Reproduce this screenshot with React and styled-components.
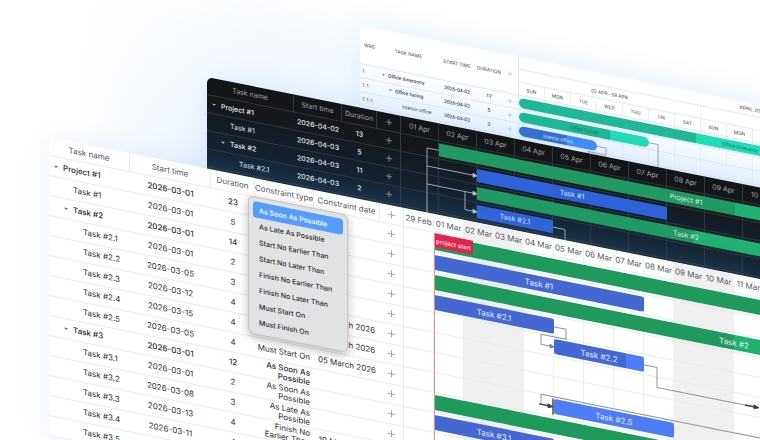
import React from 'react';
import styled, { createGlobalStyle, ThemeProvider, css } from 'styled-components';

const GlobalStyle = createGlobalStyle`
  * { box-sizing: border-box; }
  body { margin: 0; background: #fff; }
  button { font: inherit; color: inherit; background: none; border: none; padding: 0; cursor: pointer; }
`;

// Themes, one per gantt skin
const lightTheme = {
  font: '"Inter", "Liberation Sans", sans-serif',
  size: 8, headSize: 8, scaleSize: 8, head: 19, row: 20, day: 30, bar: 15, radius: 2,
  indent: 10, pad: 5, caret: 4, gap: 5,
  text: '#2b2d33', headText: '#55585e', line: '#e9eaec', scaleLine: '#eeeff1', icon: '#a4a6aa',
  background: '#fff', barText: '#e8eeff',
};

const darkTheme = {
  font: '"Inter", "Liberation Sans", sans-serif',
  size: 7, headSize: 7, scaleSize: 7, head: 18, row: 18, day: 38, bar: 13, radius: 1,
  indent: 9, pad: 5, caret: 4, gap: 5,
  text: '#e4e6e9', headText: '#a3a7ac', line: '#32373e', scaleLine: '#2f363e', icon: '#858b92',
  background: 'linear-gradient(#131416, #14171b 24px, #14293d 92px, #173453 160px)',
  barText: '#dcebea',
};

const materialTheme = {
  font: '"Roboto", "Liberation Sans", sans-serif',
  size: 5, headSize: 5, scaleSize: 5, head: 39, row: 14, day: 26, bar: 10, radius: 5,
  indent: 7, pad: 3, caret: 3, gap: 3,
  text: '#3d4a55', headText: '#4b545c', line: '#dfe8f0', scaleLine: '#e8eef4', icon: '#7fdcc8',
  background: 'linear-gradient(#fff, #fff 34px, #e3f0fd 90px)',
  barText: '#1c6f60',
};

const Stage = styled.main`
  position: relative;
  min-height: 100vh;
  overflow: hidden;
  background: #fff;
`;

const Glow = styled.div`
  position: absolute;
  inset: 0;
  background: linear-gradient(191deg, #fff 0%, #fff 12%, #e9f3fd 34%, #d3e7fb 50%);
  mask-image: linear-gradient(to right, transparent 10%, #000 36%);
`;

const Panel = styled.section`
  position: absolute;
  top: ${({ $top }) => $top}px;
  left: ${({ $left }) => $left}px;
  right: 0;
  display: flex;
  overflow: hidden;
  transform: skewY(11.3deg);
  transform-origin: 0 0;
  border-top-left-radius: 6px;
  background: ${({ theme }) => theme.background};
  color: ${({ theme }) => theme.text};
  font-family: ${({ theme }) => theme.font};
  font-size: ${({ theme }) => theme.size}px;
  box-shadow: 0 0 28px rgba(120, 180, 240, 0.16);
`;

const Grid = styled.table`
  flex: none;
  width: ${({ $width }) => $width}px;
  table-layout: fixed;
  border-spacing: 0;
  border-right: 1px solid ${({ theme }) => theme.line};
`;

const HeadCell = styled.th`
  height: ${({ theme }) => theme.head}px;
  padding: 0;
  font-size: ${({ theme }) => theme.headSize}px;
  font-weight: 400;
  color: ${({ theme }) => theme.headText};
  text-align: center;
  white-space: nowrap;
  border-bottom: 1px solid ${({ theme }) => theme.line};
  border-right: ${({ theme, $divided }) => ($divided ? `1px solid ${theme.line}` : 'none')};
`;

const Cell = styled.td`
  height: ${({ theme }) => theme.row}px;
  padding: 0 ${({ $align }) => ($align === 'right' ? 4 : 0)}px 0 ${({ $inset }) => ($inset ? 2 : 0)}px;
  line-height: 9px;
  text-align: ${({ $align }) => $align || 'center'};
  font-weight: ${({ $bold }) => ($bold ? 500 : 400)};
  white-space: ${({ $wrap }) => ($wrap ? 'normal' : 'nowrap')};
  border-bottom: 1px solid ${({ theme }) => theme.line};
`;

const NameBox = styled.div`
  display: flex;
  align-items: center;
  gap: ${({ theme }) => theme.gap}px;
  padding-left: ${({ theme, $level }) => theme.pad + $level * theme.indent}px;
`;

const Toggle = styled.button`
  display: flex;
  flex: none;
  width: ${({ theme }) => theme.caret}px;

  svg {
    width: 100%;
  }
`;

const ToggleSpace = styled.span`
  flex: none;
  width: ${({ theme }) => theme.caret}px;
`;

const AddButton = styled.button`
  display: inline-flex;
  vertical-align: middle;
  color: ${({ theme }) => theme.icon};
`;

const Timeline = styled.div`
  position: relative;
  flex: 1;
  min-width: 0;
  overflow: hidden;
`;

const Scale = styled.div`
  display: flex;
  height: ${({ theme, $height }) => $height || theme.head}px;
  font-size: ${({ theme }) => theme.scaleSize}px;
  color: ${({ theme }) => theme.headText};
  border-bottom: 1px solid ${({ theme }) => theme.line};
`;

const ScaleCell = styled.div`
  flex: none;
  display: flex;
  align-items: center;
  justify-content: center;
  width: ${({ theme, $days }) => ($days || 1) * theme.day}px;
  white-space: nowrap;
  border-right: 1px solid ${({ theme, $off }) => ($off ? '#f0f0f1' : theme.scaleLine)};
  background: ${({ $off }) => ($off ? '#f0f0f1' : 'transparent')};
`;

const Body = styled.div`
  position: relative;
`;

const DayColumns = styled.div`
  position: absolute;
  inset: 0;
  display: flex;
`;

const BarRow = styled.div`
  position: relative;
  display: grid;
  grid-auto-columns: ${({ theme }) => theme.day}px;
  align-items: center;
  height: ${({ theme }) => theme.row}px;
  border-bottom: 1px solid ${({ theme }) => theme.line};
`;

const barColors = {
  green: ['#1f9a5c', '#20b26f'],
  blue: ['#4368d2', '#4f7df8'],
  nightGreen: ['#219963', '#1fb272'],
  nightBlue: ['#2e62d8', '#3a70e8'],
  teal: ['#1fb795', '#22dcb6'],
  azure: ['#2f70cf', '#3d8bfb'],
};

const Bar = styled.div`
  grid-column: ${({ $start, $days }) => `${$start + 1} / span ${$days}`};
  grid-row: 1;
  height: ${({ theme }) => theme.bar}px;
  display: flex;
  align-items: center;
  justify-content: center;
  border-radius: ${({ theme }) => theme.radius}px;
  color: ${({ theme, $ink }) => $ink || theme.barText};
  white-space: nowrap;
  ${({ $color, $progress }) => {
    const [done, rest] = barColors[$color];
    return css`background: linear-gradient(to right, ${done} ${$progress}%, ${rest} ${$progress}%);`;
  }}
`;

const Links = styled.svg`
  position: absolute;
  top: 0;
  left: 0;
  width: 100%;
  height: 100%;
  fill: none;
  stroke: ${({ $stroke }) => $stroke};
  stroke-width: 0.8;
  pointer-events: none;
`;

const Marker = styled.div`
  position: absolute;
  top: 0;
  bottom: 0;
  left: ${({ theme }) => theme.day}px;
  border-left: 1px solid #ea8c9c;
`;

const MarkerLabel = styled.span`
  display: flex;
  align-items: center;
  height: 14px;
  padding: 0 2px 0 1px;
  background: #e0244c;
  color: #ffe3e8;
  font-size: 6px;
  font-weight: 500;
`;

const Menu = styled.div`
  position: absolute;
  top: 195px;
  left: 248px;
  width: 100px;
  padding: 4px;
  display: flex;
  flex-direction: column;
  transform: skewY(11.3deg);
  transform-origin: 0 0;
  border: 1px solid #c3c4c7;
  border-radius: 6px;
  background: #e1e2e4;
  box-shadow: 0 3px 10px rgba(0, 0, 0, 0.28);
  font-family: "Inter", "Liberation Sans", sans-serif;
  font-size: 7px;
  font-weight: 500;
  color: #2c2d30;
`;

const Option = styled.button`
  height: 16px;
  padding: 0 6px;
  text-align: left;
  white-space: nowrap;
  border-radius: 3px;
  ${({ $selected }) => $selected && css`
    background: #549dfb;
    color: #fff;
  `}
`;

const lightTasks = [
  { name: 'Project #1', level: 0, open: true, start: '2026-03-01', duration: 23, bar: [1, 23, 'green', 70] },
  { name: 'Task #1', level: 1, start: '2026-03-01', duration: 5, bar: [1, 7, 'blue', 100] },
  { name: 'Task #2', level: 1, open: true, start: '2026-03-01', duration: 14, bar: [1, 20, 'green', 50] },
  { name: 'Task #2.1', level: 2, start: '2026-03-01', duration: 2, bar: [1, 4, 'blue', 100] },
  { name: 'Task #2.2', level: 2, start: '2026-03-05', duration: 3, bar: [5, 3, 'blue', 80] },
  { name: 'Task #2.3', level: 2, start: '2026-03-12', duration: 4, date: '12 March 2026' },
  { name: 'Task #2.4', level: 2, start: '2026-03-15', duration: 4, date: '15 March 2026' },
  { name: 'Task #2.5', level: 2, start: '2026-03-05', duration: 4, type: 'Must Start On', date: '05 March 2026', bar: [5, 4, 'blue', 0] },
  { name: 'Task #3', level: 1, open: true, start: '2026-03-01', duration: 12, type: 'As Soon As Possible', bar: [1, 18, 'green', 90] },
  { name: 'Task #3.1', level: 2, start: '2026-03-01', duration: 2, type: 'As Soon As Possible', bar: [1, 4, 'blue', 100] },
  { name: 'Task #3.2', level: 2, start: '2026-03-08', duration: 3, type: 'As Late As Possible' },
  { name: 'Task #3.3', level: 2, start: '2026-03-13', duration: 4, type: 'Finish No Earlier Than', date: '19 March 2026' },
  { name: 'Task #3.4', level: 2, start: '2026-03-11', duration: 4 },
  { name: 'Task #3.5', level: 2, start: '2026-03-15', duration: 4 },
];

const darkTasks = [
  { name: 'Project #1', level: 0, open: true, start: '2026-04-02', duration: 13, bar: [1, 13, 'nightGreen', 60] },
  { name: 'Task #1', level: 1, start: '2026-04-03', duration: 5, bar: [2, 5, 'nightBlue', 100] },
  { name: 'Task #2', level: 1, open: true, start: '2026-04-03', duration: 11, bar: [2, 11, 'nightGreen', 52] },
  { name: 'Task #2.1', level: 2, start: '2026-04-03', duration: 2, bar: [2, 2, 'nightBlue', 100] },
  { name: 'Task #2.2', level: 2, start: '2026-04-06', duration: 3 },
  { name: 'Task #2.3', level: 2, start: '2026-04-08', duration: 3 },
];

const materialTasks = [
  { wbs: '1', name: 'Office itinerancy', level: 0, open: true, start: '2026-04-02', duration: 17, bar: [0, 17, 'teal', 40] },
  { wbs: '1.1', name: 'Office facing', level: 1, open: true, start: '2026-04-02', duration: 5, bar: [0, 5, 'teal', 70] },
  { wbs: '1.1.1', name: 'Interior office', level: 2, start: '2026-04-02', duration: 3, bar: [0, 3, 'azure', 62], ink: '#cfe2ff' },
  { wbs: '1.1.2', name: 'Air conditioners', level: 2, start: '2026-04-05', duration: 2 },
  { wbs: '1.2', name: 'Workplaces', level: 1, start: '2026-04-07', duration: 9 },
];

const constraints = [
  'As Soon As Possible',
  'As Late As Possible',
  'Start No Earlier Than',
  'Start No Later Than',
  'Finish No Earlier Than',
  'Finish No Later Than',
  'Must Start On',
  'Must Finish On',
];

const pad = (n) => String(n).padStart(2, '0');
const marchDays = ['29 Feb', ...Array.from({ length: 31 }, (_, i) => `${pad(i + 1)} Mar`)];
const aprilDays = Array.from({ length: 30 }, (_, i) => `${pad(i + 1)} Apr`);
const weekDays = Array.from({ length: 28 }, (_, i) => ['SUN', 'MON', 'TUE', 'WED', 'THU', 'FRI', 'SAT'][i % 7]);
const isWeekend = (index) => index % 7 === 2 || index % 7 === 3;

const Plus = ({ size }) => (
  <svg width={size} height={size} viewBox="0 0 9 9" stroke="currentColor" strokeWidth="1">
    <path d="M4.5 1v7M1 4.5h7" />
  </svg>
);

const NameCell = ({ task }) => (
  <Cell $align="left" $bold={task.open}>
    <NameBox $level={task.level}>
      {task.open ? (
        <Toggle aria-label={`Collapse ${task.name}`}>
          <svg viewBox="0 0 5 4" fill="currentColor" opacity="0.7">
            <path d="M0 0.6h5L2.5 3.4z" />
          </svg>
        </Toggle>
      ) : (
        <ToggleSpace />
      )}
      {task.name}
    </NameBox>
  </Cell>
);

const AddCell = ({ task, size }) => (
  <Cell>
    <AddButton aria-label={`Add to ${task.name}`}>
      <Plus size={size} />
    </AddButton>
  </Cell>
);

const BarRows = ({ tasks }) =>
  tasks.map((task) => (
    <BarRow key={task.name}>
      {task.bar && (
        <Bar $start={task.bar[0]} $days={task.bar[1]} $color={task.bar[2]} $progress={task.bar[3]} $ink={task.ink}>
          {task.name}
        </Bar>
      )}
    </BarRow>
  ));

const MaterialGantt = () => (
  <ThemeProvider theme={materialTheme}>
    <Panel $top={25} $left={360}>
      <Grid $width={158}>
        <colgroup>
          <col width="19" /><col width="59" /><col width="38" /><col width="26" /><col width="16" />
        </colgroup>
        <thead>
          <tr>
            <HeadCell>WBS</HeadCell>
            <HeadCell>TASK NAME</HeadCell>
            <HeadCell>START TIME</HeadCell>
            <HeadCell>DURATION</HeadCell>
            <HeadCell><AddButton aria-label="Add task"><Plus size={6} /></AddButton></HeadCell>
          </tr>
        </thead>
        <tbody>
          {materialTasks.map((task) => (
            <tr key={task.wbs}>
              <Cell $align="left" $inset>{task.wbs}</Cell>
              <NameCell task={task} />
              <Cell $bold>{task.start}</Cell>
              <Cell $bold>{task.duration}</Cell>
              <AddCell task={task} size={6} />
            </tr>
          ))}
        </tbody>
      </Grid>
      <Timeline>
        <Scale $height={13}>
          <ScaleCell $days={18}>APRIL 2026</ScaleCell>
        </Scale>
        <Scale $height={13}>
          <ScaleCell $days={7}>02 APR - 08 APR</ScaleCell>
          <ScaleCell $days={7}>09 APR - 15 APR</ScaleCell>
        </Scale>
        <Scale $height={13}>
          {weekDays.map((day, i) => <ScaleCell key={i}>{day}</ScaleCell>)}
        </Scale>
        <Body>
          <DayColumns>
            {weekDays.map((day, i) => <ScaleCell key={i} />)}
          </DayColumns>
          <BarRows tasks={materialTasks} />
          <Links $stroke="#8a97a5">
            <path d="M130 21H139V70M78 35H87V42H69V60" />
          </Links>
        </Body>
      </Timeline>
    </Panel>
  </ThemeProvider>
);

const DarkGantt = () => (
  <ThemeProvider theme={darkTheme}>
    <Panel $top={77} $left={207}>
      <Grid $width={193}>
        <colgroup>
          <col width="87" /><col width="48" /><col width="35" /><col width="23" />
        </colgroup>
        <thead>
          <tr>
            <HeadCell $divided>Task name</HeadCell>
            <HeadCell $divided>Start time</HeadCell>
            <HeadCell $divided>Duration</HeadCell>
            <HeadCell><AddButton aria-label="Add task"><Plus size={8} /></AddButton></HeadCell>
          </tr>
        </thead>
        <tbody>
          {darkTasks.map((task) => (
            <tr key={task.name}>
              <NameCell task={task} />
              <Cell $bold>{task.start}</Cell>
              <Cell $bold>{task.duration}</Cell>
              <AddCell task={task} size={8} />
            </tr>
          ))}
        </tbody>
      </Grid>
      <Timeline>
        <Scale>
          {aprilDays.map((day) => <ScaleCell key={day}>{day}</ScaleCell>)}
        </Scale>
        <Body>
          <DayColumns>
            {aprilDays.map((day) => <ScaleCell key={day} />)}
          </DayColumns>
          <BarRows tasks={darkTasks} />
          <Links $stroke="#b9bdc2">
            <path d="M38 9H26V120M26 27H74M26 45H74M64 45V63H74M152 63H164V80" />
            <path d="M72 25l4 2-4 2zM72 43l4 2-4 2zM72 61l4 2-4 2z" fill="#b9bdc2" />
          </Links>
        </Body>
      </Timeline>
    </Panel>
  </ThemeProvider>
);

const LightGantt = () => (
  <ThemeProvider theme={lightTheme}>
    <Panel $top={137} $left={49}>
      <Grid $width={354}>
        <colgroup>
          <col width="81" /><col width="81" /><col width="44" /><col width="59" /><col width="66" /><col width="23" />
        </colgroup>
        <thead>
          <tr>
            <HeadCell $divided>Task name</HeadCell>
            <HeadCell $divided>Start time</HeadCell>
            <HeadCell $divided>Duration</HeadCell>
            <HeadCell $divided>Constraint type</HeadCell>
            <HeadCell $divided>Constraint date</HeadCell>
            <HeadCell><AddButton aria-label="Add task"><Plus size={9} /></AddButton></HeadCell>
          </tr>
        </thead>
        <tbody>
          {lightTasks.map((task) => (
            <tr key={task.name}>
              <NameCell task={task} />
              <Cell $bold={task.open}>{task.start}</Cell>
              <Cell $bold={task.open}>{task.duration}</Cell>
              <Cell $align="right" $wrap $bold={task.open}>{task.type}</Cell>
              <Cell>{task.date}</Cell>
              <AddCell task={task} size={9} />
            </tr>
          ))}
        </tbody>
      </Grid>
      <Timeline>
        <Scale>
          {marchDays.map((day, i) => <ScaleCell key={day} $off={isWeekend(i)}>{day}</ScaleCell>)}
        </Scale>
        <Body>
          <DayColumns>
            {marchDays.map((day, i) => <ScaleCell key={day} $off={isWeekend(i)} />)}
          </DayColumns>
          <BarRows tasks={lightTasks} />
          <Links $stroke="#7d8086">
            <path d="M150 70H162V80H137V90H147M240 90H253V110H352M600 140H137V150H147" />
            <path d="M146 88l4 2-4 2z" fill="#7d8086" />
            <path d="M135 150H147M341 110H352" stroke="#3b3e42" strokeWidth="1.4" />
            <path d="M144 148l5 2-5 2zM350 108l5 2-5 2z" fill="#3b3e42" stroke="#3b3e42" />
            <path d="M149 142V158" stroke="#3b3e42" strokeWidth="1.4" />
          </Links>
          <Marker>
            <MarkerLabel>project start</MarkerLabel>
          </Marker>
        </Body>
      </Timeline>
    </Panel>
  </ThemeProvider>
);

const ConstraintMenu = () => (
  <Menu role="listbox" aria-label="Constraint type">
    {constraints.map((item, i) => (
      <Option key={item} role="option" aria-selected={i === 0} $selected={i === 0}>{item}</Option>
    ))}
  </Menu>
);

const App = () => (
  <>
    <GlobalStyle />
    <Stage>
      <Glow />
      <MaterialGantt />
      <DarkGantt />
      <LightGantt />
      <ConstraintMenu />
    </Stage>
  </>
);

export default App;
